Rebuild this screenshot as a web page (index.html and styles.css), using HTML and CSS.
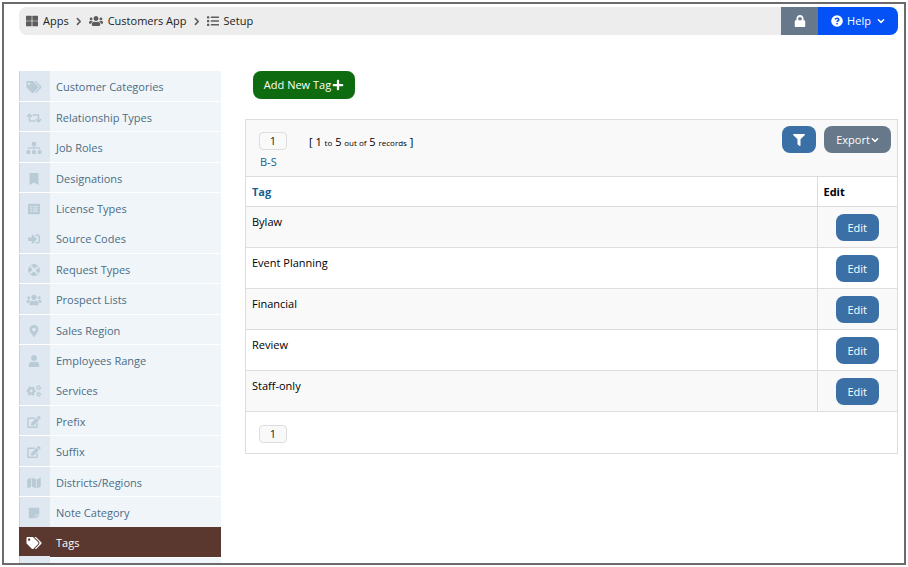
FILE: index.html
```html
<!DOCTYPE html>
<html lang="en">
<head>
<meta charset="utf-8">
<title>Setup - Tags</title>
<link rel="stylesheet" href="styles.css">
</head>
<body>
<svg class="sprite" aria-hidden="true">
  <symbol id="tags" viewBox="0 0 640 512"><path d="M497.941 225.941L286.059 14.059A48 48 0 0 0 252.118 0H48C21.49 0 0 21.49 0 48v204.118a48 48 0 0 0 14.059 33.941l211.882 211.882c18.744 18.745 49.136 18.746 67.882 0l204.118-204.118c18.745-18.745 18.745-49.137 0-67.882zM112 160c-26.51 0-48-21.49-48-48s21.49-48 48-48 48 21.49 48 48-21.49 48-48 48zm513.941 133.823L421.823 497.941c-18.745 18.745-49.137 18.745-67.882 0l-.36-.36L527.64 323.522c16.999-16.999 26.36-39.6 26.36-63.64s-9.362-46.641-26.36-63.64L331.397 0h48.721a48 48 0 0 1 33.941 14.059l211.882 211.882c18.745 18.745 18.745 49.137 0 67.882z"/></symbol>
  <symbol id="retweet" viewBox="0 0 640 512"><path d="M629.657 343.598L528.971 444.284c-9.373 9.372-24.568 9.372-33.941 0L394.343 343.598c-9.373-9.373-9.373-24.569 0-33.941l10.823-10.823c9.562-9.562 25.133-9.34 34.419.492L480 342.118V160H292.451a24.005 24.005 0 0 1-16.971-7.029l-16-16C244.361 121.851 255.069 96 276.451 96H520c13.255 0 24 10.745 24 24v222.118l40.416-42.792c9.285-9.831 24.856-10.054 34.419-.492l10.823 10.823c9.372 9.372 9.372 24.569-.001 33.941zm-265.138 15.431A23.999 23.999 0 0 0 347.548 352H160V169.881l40.416 42.792c9.286 9.831 24.856 10.054 34.419.491l10.822-10.822c9.373-9.373 9.373-24.569 0-33.941L144.971 67.716c-9.373-9.373-24.569-9.373-33.941 0L10.343 168.402c-9.373 9.373-9.373 24.569 0 33.941l10.822 10.822c9.562 9.562 25.133 9.34 34.419-.491L96 169.882V392c0 13.255 10.745 24 24 24h243.549c21.382 0 32.09-25.851 16.971-40.971l-16.001-16z"/></symbol>
  <symbol id="sitemap" viewBox="0 0 640 512"><path d="M104 272h192v48h48v-48h192v48h48v-58c0-21-17-38-38-38H344v-64h40c18 0 32-14 32-32V32c0-18-14-32-32-32H256c-18 0-32 14-32 32v96c0 18 14 32 32 32h40v64H94c-21 0-38 17-38 38v58h48z"/><rect y="352" width="160" height="160" rx="32"/><rect x="240" y="352" width="160" height="160" rx="32"/><rect x="480" y="352" width="160" height="160" rx="32"/></symbol>
  <symbol id="bookmark" viewBox="0 0 384 512"><path d="M0 512V48C0 21.49 21.49 0 48 0h288c26.51 0 48 21.49 48 48v464L192 400 0 512z"/></symbol>
  <symbol id="list-alt" viewBox="0 0 512 512"><path fill-rule="evenodd" d="M48 32h416a48 48 0 0 1 48 48v352a48 48 0 0 1-48 48H48a48 48 0 0 1-48-48V80a48 48 0 0 1 48-48zM92 160a36 36 0 1 0 72 0a36 36 0 1 0-72 0M92 256a36 36 0 1 0 72 0a36 36 0 1 0-72 0M92 352a36 36 0 1 0 72 0a36 36 0 1 0-72 0M204 140v40h212v-40zM204 236v40h212v-40zM204 332v40h212v-40z"/></symbol>
  <symbol id="sign-in" viewBox="0 0 512 512"><path d="M416 448h-84c-6.6 0-12-5.4-12-12v-40c0-6.6 5.4-12 12-12h84c17.7 0 32-14.3 32-32V160c0-17.7-14.3-32-32-32h-84c-6.6 0-12-5.4-12-12V76c0-6.6 5.4-12 12-12h84c53 0 96 43 96 96v192c0 53-43 96-96 96zm-47-201L201 79c-15-15-41-4.5-41 17v96H24c-13.3 0-24 10.7-24 24v96c0 13.3 10.7 24 24 24h136v96c0 21.5 26 32 41 17l168-168c9.3-9.4 9.3-24.6 0-34z"/></symbol>
  <symbol id="life-ring" viewBox="0 0 512 512"><g fill="none" stroke="currentColor"><circle cx="256" cy="256" r="231" stroke-width="34"/><circle cx="256" cy="256" r="168" stroke-width="144" stroke-dasharray="184 80" stroke-dashoffset="92"/></g></symbol>
  <symbol id="users" viewBox="0 0 640 512"><path d="M96 224c35.3 0 64-28.7 64-64s-28.7-64-64-64-64 28.7-64 64 28.7 64 64 64zm448 0c35.3 0 64-28.7 64-64s-28.7-64-64-64-64 28.7-64 64 28.7 64 64 64zm32 32h-64c-17.6 0-33.5 7.1-45.1 18.6 40.3 22.1 68.9 62 75.1 109.4h66c17.7 0 32-14.3 32-32v-32c0-35.3-28.7-64-64-64zm-256 0c61.9 0 112-50.1 112-112S381.9 32 320 32 208 82.1 208 144s50.1 112 112 112zm76.8 32h-8.3c-20.8 10-43.9 16-68.5 16s-47.6-6-68.5-16h-8.3C179.6 288 128 339.6 128 403.2V432c0 26.5 21.5 48 48 48h288c26.5 0 48-21.5 48-48v-28.8c0-63.6-51.6-115.2-115.2-115.2zm-223.7-13.4C161.5 263.1 145.6 256 128 256H64c-35.3 0-64 28.7-64 64v32c0 17.7 14.3 32 32 32h65.9c6.3-47.4 34.9-87.3 75.2-109.4z"/></symbol>
  <symbol id="marker" viewBox="0 0 384 512"><path d="M172.268 501.67C26.97 291.031 0 269.413 0 192 0 85.961 85.961 0 192 0s192 85.961 192 192c0 77.413-26.97 99.031-172.268 309.67-9.535 13.774-29.93 13.773-39.464 0zM192 272c44.183 0 80-35.817 80-80s-35.817-80-80-80-80 35.817-80 80 35.817 80 80 80z"/></symbol>
  <symbol id="user" viewBox="0 0 448 512"><path d="M224 256c70.7 0 128-57.3 128-128S294.7 0 224 0 96 57.3 96 128s57.3 128 128 128zm89.6 32h-16.7c-22.2 10.2-46.9 16-72.9 16s-50.6-5.8-72.9-16h-16.7C60.2 288 0 348.2 0 422.4V464c0 26.5 21.5 48 48 48h352c26.5 0 48-21.5 48-48v-41.6c0-74.2-60.2-134.4-134.4-134.4z"/></symbol>
  <symbol id="cogs" viewBox="0 0 640 512"><g fill="none" stroke="currentColor"><circle cx="200" cy="256" r="110" stroke-width="96"/><circle cx="200" cy="256" r="174" stroke-width="60" stroke-dasharray="92 90" stroke-dashoffset="46"/><circle cx="520" cy="116" r="62" stroke-width="50"/><circle cx="520" cy="116" r="94" stroke-width="32" stroke-dasharray="48 50"/><circle cx="520" cy="396" r="62" stroke-width="50"/><circle cx="520" cy="396" r="94" stroke-width="32" stroke-dasharray="48 50"/></g></symbol>
  <symbol id="edit" viewBox="0 0 576 512"><path d="M402.6 83.2l90.2 90.2c3.8 3.8 3.8 10 0 13.8L274.4 405.6l-92.8 10.3c-12.4 1.4-22.9-9.1-21.5-21.5l10.3-92.8L388.8 83.2c3.8-3.8 10-3.8 13.8 0zm162-22.9l-48.8-48.8c-15.2-15.2-39.9-15.2-55.2 0l-35.4 35.4c-3.8 3.8-3.8 10 0 13.8l90.2 90.2c3.8 3.8 10 3.8 13.8 0l35.4-35.4c15.2-15.3 15.2-40 0-55.2zM384 346.2V448H64V128h229.8c3.2 0 6.2-1.3 8.5-3.5l40-40c7.6-7.6 2.2-20.5-8.5-20.5H48C21.5 64 0 85.5 0 112v352c0 26.5 21.5 48 48 48h352c26.5 0 48-21.5 48-48V306.2c0-10.7-12.9-16-20.5-8.5l-40 40c-2.2 2.3-3.5 5.3-3.5 8.5z"/></symbol>
  <symbol id="map" viewBox="0 0 576 512"><path d="M0 117.66v346.32c0 11.32 11.43 19.06 21.94 14.86L160 416V32L20.12 87.95A32.006 32.006 0 0 0 0 117.66zM192 416l192 64V96L192 32v384zM554.06 33.16L416 96v384l139.88-55.95A31.996 31.996 0 0 0 576 394.34V48.02c0-11.32-11.43-19.06-21.94-14.86z"/></symbol>
  <symbol id="note" viewBox="0 0 448 512"><path d="M312 320h136V56c0-13.3-10.7-24-24-24H24C10.7 32 0 42.7 0 56v400c0 13.3 10.7 24 24 24h264V344c0-13.2 10.8-24 24-24zm129 55l-98 98c-4.5 4.5-10.6 7-17 7h-6V352h128v6.1c0 6.3-2.5 12.4-7 16.9z"/></symbol>
  <symbol id="grid" viewBox="0 0 512 512"><rect y="32" width="240" height="212" rx="24"/><rect x="272" y="32" width="240" height="212" rx="24"/><rect y="268" width="240" height="212" rx="24"/><rect x="272" y="268" width="240" height="212" rx="24"/></symbol>
  <symbol id="list" viewBox="0 0 512 512"><rect y="48" width="96" height="96" rx="16"/><rect y="208" width="96" height="96" rx="16"/><rect y="368" width="96" height="96" rx="16"/><rect x="160" y="64" width="352" height="64" rx="16"/><rect x="160" y="224" width="352" height="64" rx="16"/><rect x="160" y="384" width="352" height="64" rx="16"/></symbol>
  <symbol id="lock" viewBox="0 0 448 512"><path d="M400 224h-24v-72C376 68.2 307.8 0 224 0S72 68.2 72 152v72H48c-26.5 0-48 21.5-48 48v192c0 26.5 21.5 48 48 48h352c26.5 0 48-21.5 48-48V272c0-26.5-21.5-48-48-48zm-104 0H152v-72c0-39.7 32.3-72 72-72s72 32.3 72 72v72z"/></symbol>
  <symbol id="filter" viewBox="0 0 512 512"><path d="M487.976 0H24.028C2.71 0-8.047 25.866 7.058 40.971L192 225.941V432c0 7.831 3.821 15.17 10.237 19.662l80 55.98C298.02 518.69 320 507.493 320 487.98V225.941l184.947-184.97C520.021 25.896 509.338 0 487.976 0z"/></symbol>
  <symbol id="plus" viewBox="0 0 448 512"><path d="M416 208H272V64c0-18-14-32-32-32h-32c-18 0-32 14-32 32v144H32c-18 0-32 14-32 32v32c0 18 14 32 32 32h144v144c0 18 14 32 32 32h32c18 0 32-14 32-32V304h144c18 0 32-14 32-32v-32c0-18-14-32-32-32z"/></symbol>
  <symbol id="help" viewBox="0 0 512 512"><circle cx="256" cy="256" r="248"/><path class="help-mark" d="M176 188c18-36 44-52 82-52 40 0 74 26 74 62 0 54-72 50-72 100"/><circle class="help-dot" cx="258" cy="372" r="38"/></symbol>
  <symbol id="down" viewBox="0 0 448 512"><path class="stroke" d="M54 176l170 168 170-168"/></symbol>
  <symbol id="right" viewBox="0 0 320 512"><path class="stroke" d="M70 96l160 160L70 416"/></symbol>
</svg>

<div class="frame">
  <header class="topbar">
    <nav class="crumbs" aria-label="Breadcrumb">
      <a href="#"><svg class="icon i-12"><use href="#grid"/></svg>Apps</a>
      <svg class="icon sep"><use href="#right"/></svg>
      <a href="#"><svg class="icon i-14"><use href="#users"/></svg>Customers App</a>
      <svg class="icon sep"><use href="#right"/></svg>
      <a href="#"><svg class="icon i-12"><use href="#list"/></svg>Setup</a>
    </nav>
    <button class="lock" type="button" aria-label="Lock"><svg class="icon i-12"><use href="#lock"/></svg></button>
    <button class="help" type="button"><svg class="icon i-12"><use href="#help"/></svg>Help<svg class="icon caret"><use href="#down"/></svg></button>
  </header>

  <div class="columns">
    <nav class="side" aria-label="Setup">
      <a href="#"><span class="cell"><svg class="icon"><use href="#tags"/></svg></span>Customer Categories</a>
      <a href="#"><span class="cell"><svg class="icon"><use href="#retweet"/></svg></span>Relationship Types</a>
      <a href="#"><span class="cell"><svg class="icon"><use href="#sitemap"/></svg></span>Job Roles</a>
      <a href="#"><span class="cell"><svg class="icon"><use href="#bookmark"/></svg></span>Designations</a>
      <a href="#"><span class="cell"><svg class="icon"><use href="#list-alt"/></svg></span>License Types</a>
      <a href="#"><span class="cell"><svg class="icon"><use href="#sign-in"/></svg></span>Source Codes</a>
      <a href="#"><span class="cell"><svg class="icon"><use href="#life-ring"/></svg></span>Request Types</a>
      <a href="#"><span class="cell"><svg class="icon"><use href="#users"/></svg></span>Prospect Lists</a>
      <a href="#"><span class="cell"><svg class="icon"><use href="#marker"/></svg></span>Sales Region</a>
      <a href="#"><span class="cell"><svg class="icon"><use href="#user"/></svg></span>Employees Range</a>
      <a href="#"><span class="cell"><svg class="icon"><use href="#cogs"/></svg></span>Services</a>
      <a href="#"><span class="cell"><svg class="icon"><use href="#edit"/></svg></span>Prefix</a>
      <a href="#"><span class="cell"><svg class="icon"><use href="#edit"/></svg></span>Suffix</a>
      <a href="#"><span class="cell"><svg class="icon"><use href="#map"/></svg></span>Districts/Regions</a>
      <a href="#"><span class="cell"><svg class="icon"><use href="#note"/></svg></span>Note Category</a>
      <a href="#" class="active" aria-current="page"><span class="cell"><svg class="icon"><use href="#tags"/></svg></span>Tags</a>
      <div class="side-end"><span class="cell"></span></div>
    </nav>

    <main class="main">
      <button class="add" type="button">Add New Tag<svg class="icon i-12"><use href="#plus"/></svg></button>
      <section class="panel">
        <div class="tools">
          <div class="pages">
            <a class="page" href="#">1</a>
            <a class="range" href="#">B-S</a>
          </div>
          <p class="count">[ 1 <small>to</small> 5 <small>out of</small> 5 <small>records</small> ]</p>
          <button class="btn filter" type="button" aria-label="Filter"><svg class="icon i-12"><use href="#filter"/></svg></button>
          <button class="btn export" type="button">Export<svg class="icon caret"><use href="#down"/></svg></button>
        </div>
        <table>
          <thead><tr><th><a href="#">Tag</a></th><th class="edit-col">Edit</th></tr></thead>
          <tbody>
            <tr><td>Bylaw</td><td><button class="btn edit" type="button">Edit</button></td></tr>
            <tr><td>Event Planning</td><td><button class="btn edit" type="button">Edit</button></td></tr>
            <tr><td>Financial</td><td><button class="btn edit" type="button">Edit</button></td></tr>
            <tr><td>Review</td><td><button class="btn edit" type="button">Edit</button></td></tr>
            <tr><td>Staff-only</td><td><button class="btn edit" type="button">Edit</button></td></tr>
          </tbody>
        </table>
        <div class="foot"><a class="page" href="#">1</a></div>
      </section>
    </main>
  </div>
</div>
</body>
</html>
```
FILE: styles.css
```css
* { box-sizing: border-box; }

body {
  margin: 0;
  padding: 2px;
  height: 100vh;
  background: #fff;
  color: #000;
  font: 11px/16px "Open Sans", sans-serif;
}

a { color: inherit; text-decoration: none; }
button { font: inherit; color: #fff; border: 0; padding: 0; cursor: pointer; }

.sprite { display: none; }
.icon { width: 16px; height: 12px; fill: currentColor; flex: none; }
.i-12 { width: 12px; height: 12px; }
.i-14 { width: 14px; height: 12px; }
.caret { width: 8px; height: 8px; }
.stroke { fill: none; stroke: currentColor; stroke-width: 96px; stroke-linecap: round; stroke-linejoin: round; }
.help-mark { fill: none; stroke: #0451f5; stroke-width: 68px; }
.help-dot { fill: #0451f5; }

.frame {
  height: 100%;
  border: 2px solid #6b6b6b;
  padding: 3px 6px 0 15px;
  overflow: hidden;
}

.topbar {
  display: flex;
  height: 28px;
  border-radius: 8px;
  background: #ededed;
  overflow: hidden;
}
.crumbs { flex: 1; display: flex; align-items: center; gap: 6px; padding-left: 7px; color: #222; }
.crumbs a { display: flex; align-items: center; gap: 5px; }
.crumbs .icon { color: #5d5d5d; }
.crumbs .sep { width: 8px; height: 9px; }
.lock { width: 37px; background: #66788a; }
.lock .icon { display: block; margin: auto; }
.help { display: flex; align-items: center; justify-content: center; gap: 4px; width: 80px; background: #0451f5; }
.help .caret { margin-left: 2px; }

.columns { display: flex; align-items: flex-start; gap: 24px; margin-top: 36px; }

.side { flex: none; width: 202px; color: #4c6d85; }
.side a, .side-end {
  display: flex;
  align-items: center;
  gap: 6px;
  height: 30px;
  background: #f0f5f9;
  border-bottom: 1px solid #fff;
  line-height: 18px;
}
.side a { padding-top: 2px; }
.side a:nth-child(5n+1), .side a:nth-child(5n+3) { height: 31px; }
.side a:nth-child(5n) { border-bottom: 0; }
.cell {
  display: flex;
  align-items: center;
  justify-content: center;
  align-self: stretch;
  width: 31px;
  margin-top: -2px;
  padding: 2px 2px 0 0;
  border-left: 1px solid #c4d4e0;
  background: #dfe8f0;
  color: #b9cbd7;
}
.side .active { background: #5a372f; color: #fff; }
.active .cell { background: none; border-color: #5a372f; color: #fff; }

.main { flex: 1; min-width: 0; }
.add {
  display: flex;
  align-items: center;
  justify-content: center;
  gap: 1px;
  width: 102px;
  height: 28px;
  margin: 0 0 20px 8px;
  border-radius: 8px;
  background: #0f6b0f;
}
.panel { border: 1px solid #ddd; }
.tools { display: flex; align-items: flex-start; gap: 8px; height: 56px; padding: 6px 6px 0 13px; background: #f9f9f9; }
.pages { display: flex; flex-direction: column; gap: 4px; padding-top: 6px; }
.page {
  display: block;
  width: 28px;
  height: 18px;
  border: 1px solid #ddd;
  border-radius: 4px;
  background: #f9f9f9;
  color: #222;
  text-align: center;
}
.range { padding-left: 1px; color: #16618f; }
.count { flex: 1; margin: 8px 0 0 14px; }
.count small { font-size: 8px; }

.btn { border-radius: 8px; background: #3a70a6; }
.filter { width: 34px; height: 27px; }
.filter .icon { display: block; margin: auto; }
.export { display: flex; align-items: center; justify-content: center; gap: 1px; width: 67px; height: 27px; background: #66788a; }
.edit { display: block; width: 43px; height: 27px; margin: auto; }

table { width: 100%; border-collapse: collapse; }
th, td { padding: 7px 6px; border-bottom: 1px solid #ddd; text-align: left; vertical-align: top; }
th { border-top: 1px solid #ddd; padding: 7px 6px 6px; }
th a { color: #16618f; }
th + th, td + td { border-left: 1px solid #ddd; }
td + td { padding: 7px 0 6px; }
.edit-col { width: 80px; }
tbody tr:nth-child(odd) { background: #f9f9f9; }
.foot { height: 41px; padding: 13px; }
```
